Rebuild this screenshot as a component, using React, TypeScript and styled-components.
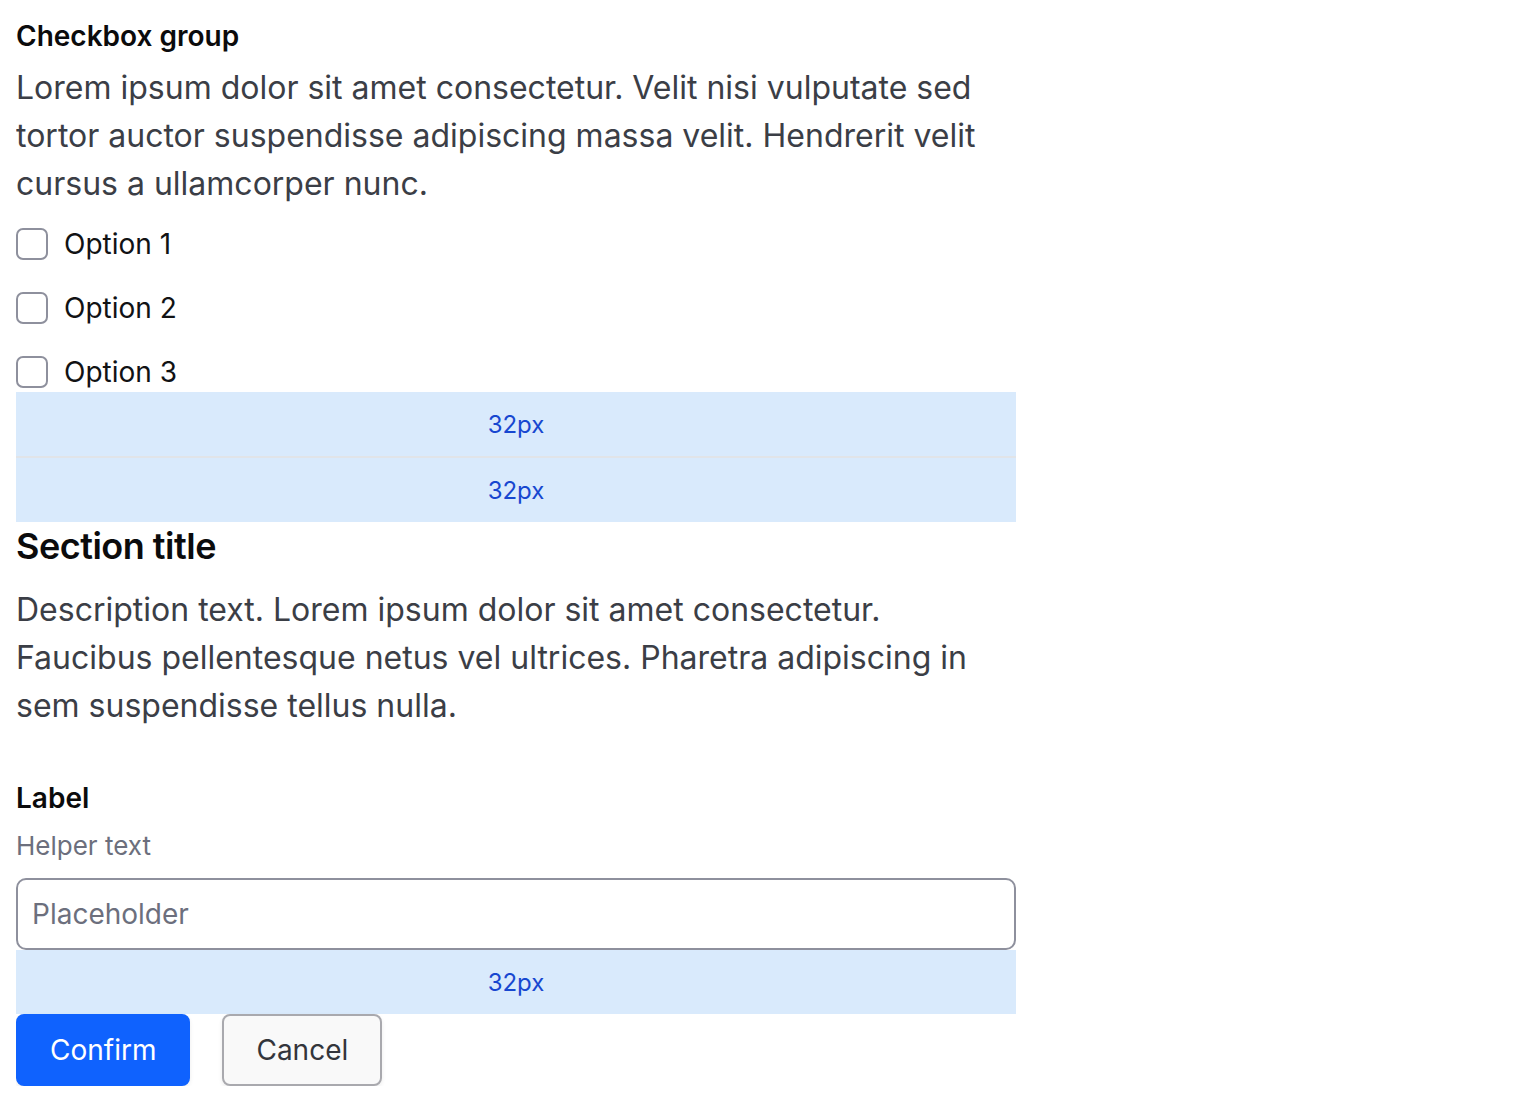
import React from 'react';
import styled, { createGlobalStyle } from 'styled-components';

const GlobalStyle = createGlobalStyle`
  body {
    margin: 16px;
    background: #ffffff;
    font-family: Inter, "Noto Sans", "Liberation Sans", sans-serif;
    -webkit-font-smoothing: antialiased;
  }
`;

const Page = styled.div`
  width: 1000px;
  display: flex;
  flex-direction: column;
`;

const GroupTitle = styled.div`
  font-size: 28px;
  line-height: 40px;
  font-weight: 600;
  color: #0b0b0c;
`;

const Paragraph = styled.p<{ $top: number }>`
  margin: ${(p) => p.$top}px 0 0;
  font-size: 32px;
  line-height: 48px;
  color: #3b3e46;
`;

const OptionList = styled.div`
  margin-top: 16px;
  display: flex;
  flex-direction: column;
  gap: 24px;
`;

const OptionRow = styled.label`
  display: flex;
  align-items: center;
  gap: 16px;
  height: 40px;
  font-size: 28px;
  color: #111214;
`;

const Box = styled.span`
  width: 32px;
  height: 32px;
  box-sizing: border-box;
  border: 2px solid #8e909d;
  border-radius: 7px;
  background: #ffffff;
`;

const Spacer = styled.div<{ $divider?: boolean }>`
  height: 64px;
  background: #d9eafc;
  display: flex;
  align-items: center;
  justify-content: center;
  font-size: 24px;
  color: #1747d0;
  border-bottom: ${(p) => (p.$divider ? '2px solid #e1e4e8' : 'none')};
`;

const SectionTitle = styled.h2`
  margin: 0;
  font-size: 36px;
  line-height: 48px;
  font-weight: 600;
  letter-spacing: -0.5px;
  color: #0b0b0c;
`;

const FieldLabel = styled.div`
  margin-top: 48px;
  font-size: 28px;
  line-height: 40px;
  font-weight: 600;
  color: #0b0b0c;
`;

const Helper = styled.div`
  margin-top: 8px;
  font-size: 26px;
  line-height: 40px;
  color: #6c6f7d;
`;

const Input = styled.input`
  margin-top: 12px;
  height: 72px;
  box-sizing: border-box;
  border: 2px solid #8e909d;
  border-radius: 10px;
  padding: 0 14px;
  font-family: inherit;
  font-size: 28px;
  color: #111214;
  outline: none;
  &::placeholder {
    color: #6c6f7d;
  }
`;

const Actions = styled.div`
  display: flex;
  gap: 32px;
`;

const Button = styled.button<{ $primary?: boolean }>`
  height: 72px;
  box-sizing: border-box;
  padding: 0 32px;
  border-radius: 8px;
  font-family: inherit;
  font-size: 28px;
  border: ${(p) => (p.$primary ? '2px solid #0f62fe' : '2px solid #a9a9ae')};
  background: ${(p) => (p.$primary ? '#0f62fe' : '#f9f9f9')};
  color: ${(p) => (p.$primary ? '#ffffff' : '#33353b')};
  box-shadow: 0 2px 4px rgba(0, 0, 0, 0.08);
`;

const options = ['Option 1', 'Option 2', 'Option 3'];

const App: React.FC = () => (
  <>
    <GlobalStyle />
    <Page>
      <GroupTitle>Checkbox group</GroupTitle>
      <Paragraph $top={8}>
        Lorem ipsum dolor sit amet consectetur. Velit nisi vulputate sed tortor auctor
        suspendisse adipiscing massa velit. Hendrerit velit cursus a ullamcorper nunc.
      </Paragraph>
      <OptionList>
        {options.map((o) => (
          <OptionRow key={o}>
            <Box />
            {o}
          </OptionRow>
        ))}
      </OptionList>
      <Spacer $divider>32px</Spacer>
      <Spacer>32px</Spacer>
      <SectionTitle>Section title</SectionTitle>
      <Paragraph $top={16}>
        Description text. Lorem ipsum dolor sit amet consectetur. Faucibus pellentesque
        netus vel ultrices. Pharetra adipiscing in sem suspendisse tellus nulla.
      </Paragraph>
      <FieldLabel>Label</FieldLabel>
      <Helper>Helper text</Helper>
      <Input placeholder="Placeholder" />
      <Spacer>32px</Spacer>
      <Actions>
        <Button $primary>Confirm</Button>
        <Button>Cancel</Button>
      </Actions>
    </Page>
  </>
);

export default App;
